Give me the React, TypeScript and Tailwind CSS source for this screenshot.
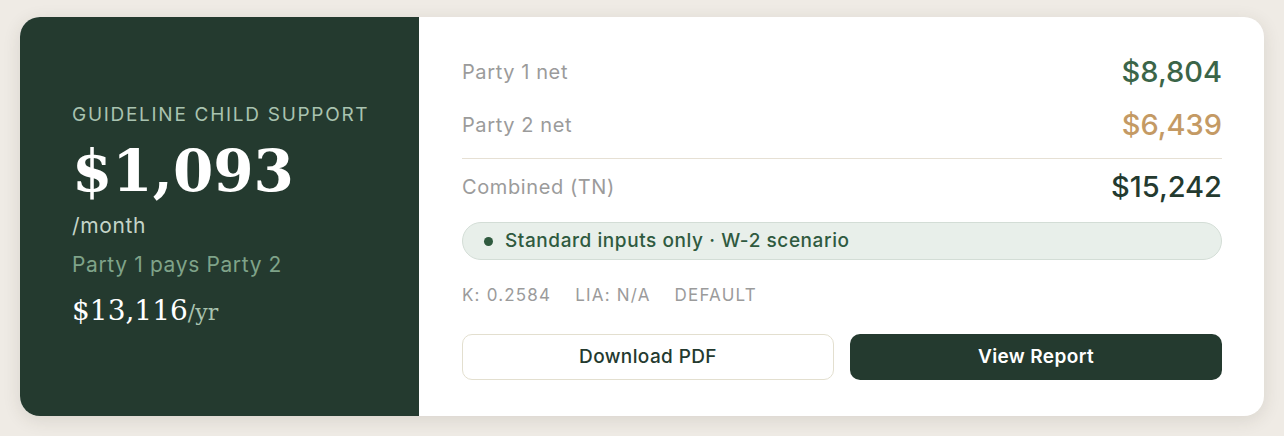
import React from 'react';

const sans = { fontFamily: 'Inter, "Noto Sans", sans-serif' };
const serif = { fontFamily: '"DejaVu Serif", Georgia, serif' };

const Row = ({ label, value, color }: { label: string; value: string; color: string }) => (
  <div className="flex h-[36px] items-center justify-between">
    <span className="text-[20px] tracking-[0.03em] text-[#9b9b9b]">{label}</span>
    <span className={`text-[29px] font-medium ${color}`}>{value}</span>
  </div>
);

export default function App() {
  return (
    <div className="h-[436px] w-full bg-[#efebe5] pt-[17px] px-[20px]" style={sans}>
      <div className="flex h-[399px] overflow-hidden rounded-[20px] bg-white shadow-[0_4px_18px_rgba(60,50,30,0.12)]">
        {/* LEFT */}
        <div className="flex w-[399px] flex-col justify-center bg-[#243a2f] pl-[52px]">
          <p className="text-[19px] leading-[26px] tracking-[0.09em] text-[#a9c3b0]">
            GUIDELINE CHILD SUPPORT
          </p>
          <p className="mt-[10px] text-[58px] font-bold leading-[66px] text-white" style={serif}>
            $1,093
          </p>
          <p className="mt-[8px] text-[21px] leading-[28px] tracking-[0.03em] text-[#c4d5c9]">/month</p>
          <p className="mt-[11px] text-[21px] leading-[28px] tracking-[0.03em] text-[#7fa389]">
            Party 1 pays Party 2
          </p>
          <p className="mt-[13px] text-[28px] leading-[38px] text-white" style={serif}>
            $13,116<span className="text-[22px] text-[#a9c3b0]">/yr</span>
          </p>
        </div>

        {/* RIGHT */}
        <div className="flex flex-1 flex-col pl-[43px] pr-[42px] pt-[37px]">
          <Row label="Party 1 net" value="$8,804" color="text-[#3b6548]" />
          <div className="mt-[17px]">
            <Row label="Party 2 net" value="$6,439" color="text-[#c49a64]" />
          </div>
          <div className="mt-[15px] h-px bg-[#e6e0d4]" />
          <div className="mt-[10px]">
            <Row label="Combined (TN)" value="$15,242" color="text-[#243a2f]" />
          </div>
          <div className="mt-[17px] flex h-[38px] items-center gap-[12px] rounded-full border border-[#d3ddd6] bg-[#e8efea] pl-[21px]">
            <span className="h-[9px] w-[9px] rounded-full bg-[#2f5a3f]" />
            <span className="text-[19px] font-medium tracking-[0.03em] text-[#2f5a3f]">
              Standard inputs only · W-2 scenario
            </span>
          </div>
          <div className="mt-[23px] flex gap-[24px] text-[17px] leading-[24px] tracking-[0.07em] text-[#9b9b9b]">
            <span>K: 0.2584</span>
            <span>LIA: N/A</span>
            <span>DEFAULT</span>
          </div>
          <div className="mt-[27px] grid grid-cols-2 gap-[16px]">
            <button className="h-[46px] rounded-[10px] border border-[#e3dfcf] bg-white text-[19px] font-medium tracking-[0.02em] text-[#243a2f]">
              Download PDF
            </button>
            <button className="h-[46px] rounded-[10px] bg-[#243a2f] text-[19px] font-semibold tracking-[0.02em] text-white">
              View Report
            </button>
          </div>
        </div>
      </div>
    </div>
  );
}
